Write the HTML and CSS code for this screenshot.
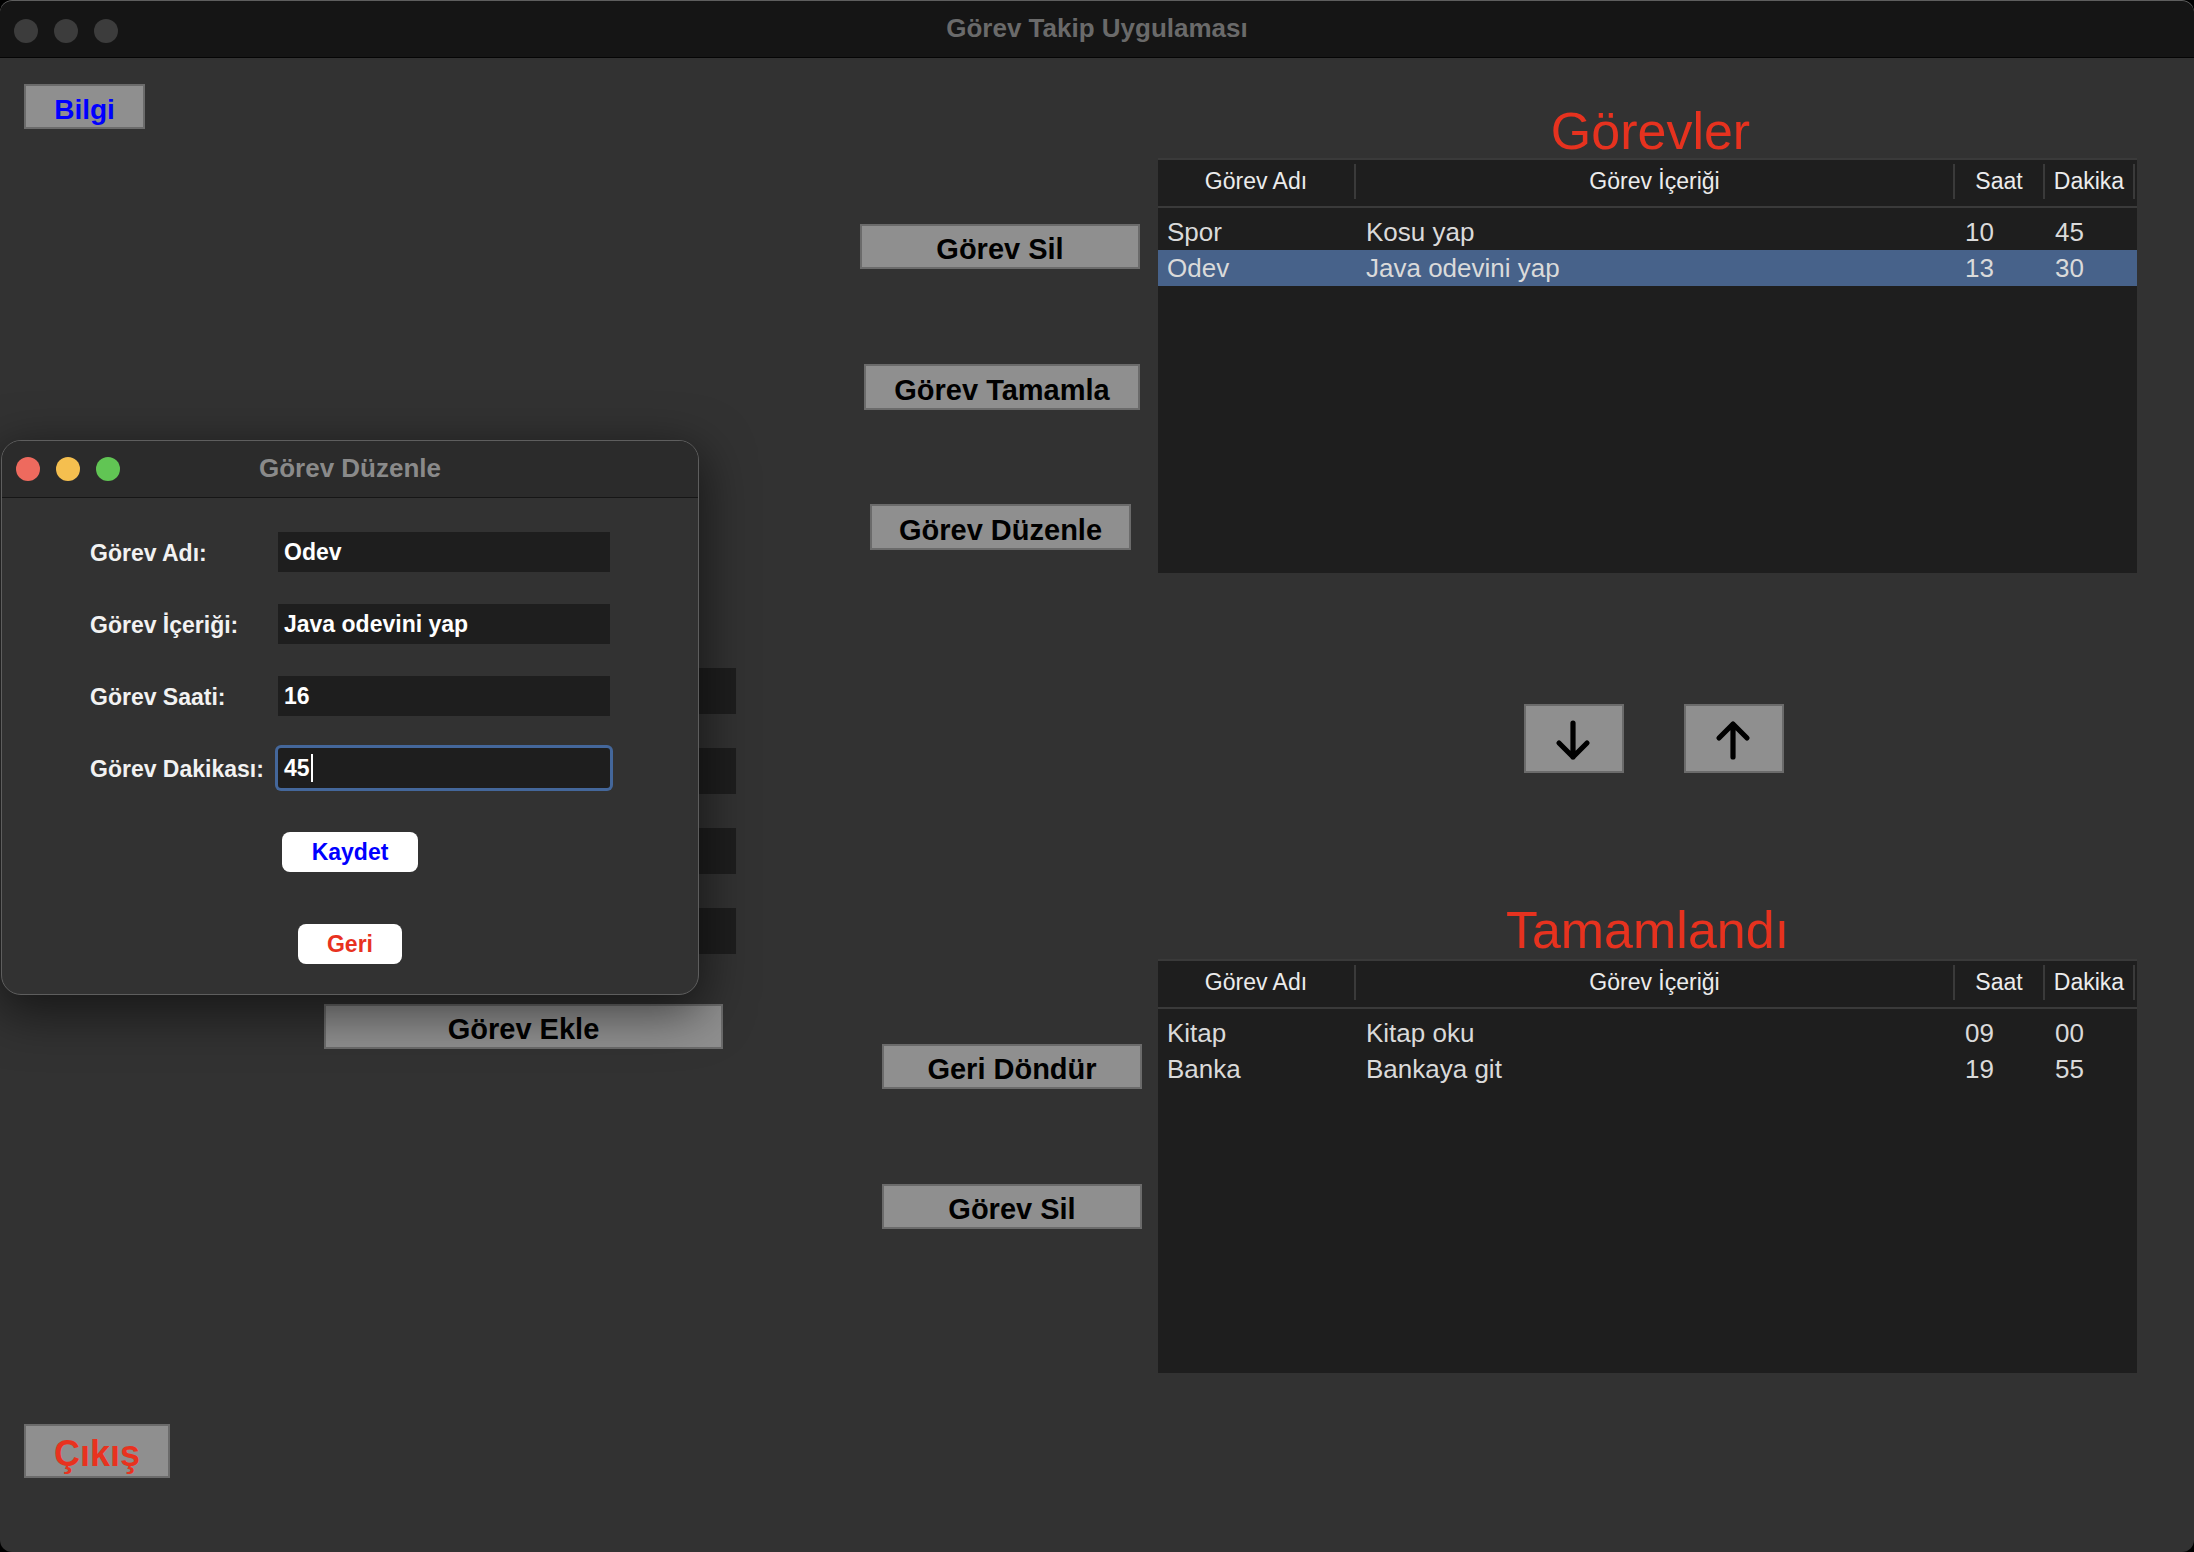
FILE: index.html
```html
<!DOCTYPE html>
<html lang="tr">
<head>
<meta charset="utf-8">
<title>Görev Takip Uygulaması</title>
<link rel="stylesheet" href="styles.css">
</head>
<body>
<div class="window">
  <div class="titlebar">
    <div class="lights">
      <span class="light off"></span><span class="light off"></span><span class="light off"></span>
    </div>
    <div class="title">Görev Takip Uygulaması</div>
    <div></div>
  </div>

  <div class="content">
    <div class="left">
      <button class="btn btn-bilgi">Bilgi</button>
      <div class="form">
        <div class="form-field"></div>
        <div class="form-field"></div>
        <div class="form-field"></div>
        <div class="form-field"></div>
      </div>
      <button class="btn btn-ekle">Görev Ekle</button>
      <button class="btn btn-cikis">Çıkış</button>
    </div>

    <div class="actions">
      <button class="btn act act-sil">Görev Sil</button>
      <button class="btn act act-tamamla">Görev Tamamla</button>
      <button class="btn act act-duzenle">Görev Düzenle</button>
      <button class="btn act act-geri">Geri Döndür</button>
      <button class="btn act act-sil2">Görev Sil</button>
    </div>

    <div class="lists">
      <h2 class="section-title title-top">Görevler</h2>
      <div class="table">
        <div class="thead">
          <div class="th">Görev Adı</div>
          <div class="th">Görev İçeriği</div>
          <div class="th">Saat</div>
          <div class="th">Dakika</div>
        </div>
        <div class="tbody">
          <div class="tr">
            <div class="td">Spor</div><div class="td">Kosu yap</div><div class="td">10</div><div class="td">45</div>
          </div>
          <div class="tr selected">
            <div class="td">Odev</div><div class="td">Java odevini yap</div><div class="td">13</div><div class="td">30</div>
          </div>
        </div>
      </div>

      <div class="arrows">
        <button class="arrow-btn" aria-label="Aşağı">
          <svg width="100" height="69" viewBox="0 0 100 69"><path d="M49 19 V53 M35 39 L49 53 L63 39" fill="none" stroke="#000" stroke-width="5.2" stroke-linecap="round" stroke-linejoin="round"/></svg>
        </button>
        <button class="arrow-btn" aria-label="Yukarı">
          <svg width="100" height="69" viewBox="0 0 100 69"><path d="M49 53 V20 M35 34 L49 20 L63 34" fill="none" stroke="#000" stroke-width="5.2" stroke-linecap="round" stroke-linejoin="round"/></svg>
        </button>
      </div>

      <h2 class="section-title title-bottom">Tamamlandı</h2>
      <div class="table table-done">
        <div class="thead">
          <div class="th">Görev Adı</div>
          <div class="th">Görev İçeriği</div>
          <div class="th">Saat</div>
          <div class="th">Dakika</div>
        </div>
        <div class="tbody">
          <div class="tr">
            <div class="td">Kitap</div><div class="td">Kitap oku</div><div class="td">09</div><div class="td">00</div>
          </div>
          <div class="tr">
            <div class="td">Banka</div><div class="td">Bankaya git</div><div class="td">19</div><div class="td">55</div>
          </div>
        </div>
      </div>
    </div>
  </div>

  <div class="dialog">
    <div class="dtitlebar">
      <div class="lights dlights">
        <span class="light red"></span><span class="light yellow"></span><span class="light green"></span>
      </div>
      <div class="dtitle">Görev Düzenle</div>
      <div></div>
    </div>
    <div class="dbody">
      <div class="dform">
        <label class="dlabel">Görev Adı:</label><div class="dfield">Odev</div>
        <label class="dlabel">Görev İçeriği:</label><div class="dfield">Java odevini yap</div>
        <label class="dlabel">Görev Saati:</label><div class="dfield">16</div>
        <label class="dlabel">Görev Dakikası:</label><div class="dfield focused">45<span class="caret"></span></div>
      </div>
      <button class="dbtn dbtn-kaydet">Kaydet</button>
      <button class="dbtn dbtn-geri">Geri</button>
    </div>
  </div>
</div>
</body>
</html>
```

FILE: styles.css
```css
html, body {
  margin: 0;
  padding: 0;
}
body {
  background: #000;
  width: 2194px;
  height: 1552px;
  overflow: hidden;
  font-family: "Liberation Sans", Arial, sans-serif;
}
.window {
  position: relative;
  width: 2194px;
  height: 1552px;
  border-radius: 12px;
  background: #323232;
  overflow: hidden;
}

/* title bar */
.titlebar {
  height: 57px;
  border-bottom: 1px solid #050505;
  background: #151515;
  border-radius: 12px 12px 0 0;
  box-shadow: inset 0 1px 0 #5e5e5e;
  display: grid;
  grid-template-columns: 1fr auto 1fr;
  align-items: center;
}
.lights {
  display: flex;
  gap: 16px;
  padding-left: 14px;
  margin-top: 4px;
}
.light {
  width: 24px;
  height: 24px;
  border-radius: 50%;
  display: block;
}
.light.off { background: #3c3c3c; }
.light.red { background: #ee6a5e; }
.light.yellow { background: #f5bf4f; }
.light.green { background: #61c554; }
.title {
  font-weight: bold;
  font-size: 26px;
  color: #6a6a6a;
}

/* content */
.content {
  display: flex;
  height: 1494px;
}
.btn {
  appearance: none;
  box-sizing: border-box;
  margin: 0;
  padding: 6px 0 0 0;
  background: #8f8f8f;
  border: 2px solid #6b6b6b;
  border-radius: 0;
  font-family: "Liberation Sans", Arial, sans-serif;
  font-weight: bold;
  font-size: 29px;
  color: #000;
  display: flex;
  align-items: center;
  justify-content: center;
  white-space: nowrap;
}

.left {
  width: 840px;
  box-sizing: border-box;
  padding-left: 24px;
  display: flex;
  flex-direction: column;
  align-items: flex-start;
}
.btn-bilgi {
  margin-top: 26px;
  width: 121px;
  height: 45px;
  font-size: 28px;
  color: #0000ff;
}
.form {
  margin-top: 539px;
  margin-left: 300px;
  display: grid;
  grid-template-columns: 412px;
  row-gap: 34px;
}
.form-field {
  height: 46px;
  background: #1e1e1e;
}
.btn-ekle {
  margin-top: 50px;
  margin-left: 300px;
  width: 399px;
  height: 45px;
}
.btn-cikis {
  margin-top: 375px;
  width: 146px;
  height: 54px;
  font-size: 36px;
  padding-top: 5px;
  color: #e8321f;
}

/* action buttons column */
.actions {
  width: 318px;
  display: flex;
  flex-direction: column;
  align-items: flex-start;
}
.act-sil { margin-top: 166px; margin-left: 20px; width: 280px; height: 45px; }
.act-tamamla { margin-top: 95px; margin-left: 24px; width: 276px; height: 46px; }
.act-duzenle { margin-top: 94px; margin-left: 30px; width: 261px; height: 46px; }
.act-geri { margin-top: 494px; margin-left: 42px; width: 260px; height: 45px; }
.act-sil2 { margin-top: 95px; margin-left: 42px; width: 260px; height: 45px; }

/* lists */
.lists {
  width: 979px;
  display: flex;
  flex-direction: column;
}
.section-title {
  margin: 0;
  height: 52px;
  font-weight: normal;
  font-size: 52px;
  line-height: 52px;
  text-align: center;
  color: #e6321f;
}
.title-top { margin-top: 47px; margin-bottom: 1px; padding-left: 6px; }
.title-bottom { margin-top: 131px; margin-bottom: 3px; }

.table {
  height: 415px;
  box-sizing: border-box;
  background: #1e1e1e;
  border-top: 2px solid #3a3a3a;
}
.table-done { height: 414px; }
.thead {
  display: grid;
  grid-template-columns: 198px 599px 90px 90px;
  padding: 4px 0 7px 0;
  border-bottom: 2px solid #3a3a3a;
}
.th {
  height: 35px;
  box-sizing: border-box;
  border-right: 2px solid #3a3a3a;
  display: flex;
  align-items: center;
  justify-content: center;
  font-size: 23px;
  color: #ececec;
}
.tbody {
  padding-top: 6px;
}
.tr {
  display: grid;
  grid-template-columns: 198px 599px 90px 90px 2px;
  height: 36px;
  align-items: center;
}
.tr.selected {
  background: #47628a;
}
.td {
  padding-left: 10px;
  font-size: 26px;
  color: #dadada;
  white-space: nowrap;
}
.tr .td:first-child { padding-left: 9px; }

.arrows {
  margin-top: 131px;
  height: 69px;
  display: flex;
  justify-content: center;
  gap: 60px;
  padding-left: 12px;
}
.arrow-btn {
  appearance: none;
  margin: 0;
  padding: 0;
  border: none;
  width: 100px;
  height: 69px;
  background: #8f8f8f;
  box-shadow: inset 0 0 0 2px #6b6b6b;
}
.arrow-btn svg { display: block; }

/* dialog */
.dialog {
  position: absolute;
  left: 1px;
  top: 440px;
  width: 698px;
  height: 555px;
  box-sizing: border-box;
  border: 1px solid #5e5e5e;
  border-radius: 20px;
  background: #323232;
  overflow: hidden;
  box-shadow: 0 14px 50px 4px rgba(0, 0, 0, 0.55);
}
.dtitlebar {
  height: 56px;
  border-bottom: 1px solid #161616;
  background: #2b2b2b;
  display: grid;
  grid-template-columns: 1fr auto 1fr;
  align-items: center;
}
.dlights {
  margin-top: 0;
  padding-left: 14px;
}
.dtitle {
  font-weight: bold;
  font-size: 26px;
  color: #8a8a8a;
  margin-top: -2px;
}
.dbody {
  padding-top: 34px;
  display: flex;
  flex-direction: column;
  align-items: center;
}
.dform {
  align-self: flex-start;
  margin-left: 88px;
  display: grid;
  grid-template-columns: 188px 332px;
  row-gap: 32px;
}
.dlabel {
  align-self: center;
  font-weight: bold;
  font-size: 23px;
  color: #f2f2f2;
  padding-top: 3px;
}
.dfield {
  height: 40px;
  box-sizing: border-box;
  padding-left: 6px;
  background: #1e1e1e;
  display: flex;
  align-items: center;
  font-weight: bold;
  font-size: 23px;
  color: #ffffff;
}
.dfield.focused {
  border-radius: 3px;
  box-shadow: 0 0 0 3px #44679b;
}
.caret {
  display: inline-block;
  width: 2px;
  height: 28px;
  margin-left: 1px;
  background: #ffffff;
}
.dbtn {
  appearance: none;
  margin: 0;
  padding: 0;
  border: none;
  height: 40px;
  border-radius: 8px;
  background: #ffffff;
  font-family: "Liberation Sans", Arial, sans-serif;
  font-weight: bold;
  font-size: 23px;
}
.dbtn-kaydet {
  margin-top: 44px;
  width: 136px;
  color: #0000ff;
}
.dbtn-geri {
  margin-top: 52px;
  width: 104px;
  color: #e8321f;
}
```
